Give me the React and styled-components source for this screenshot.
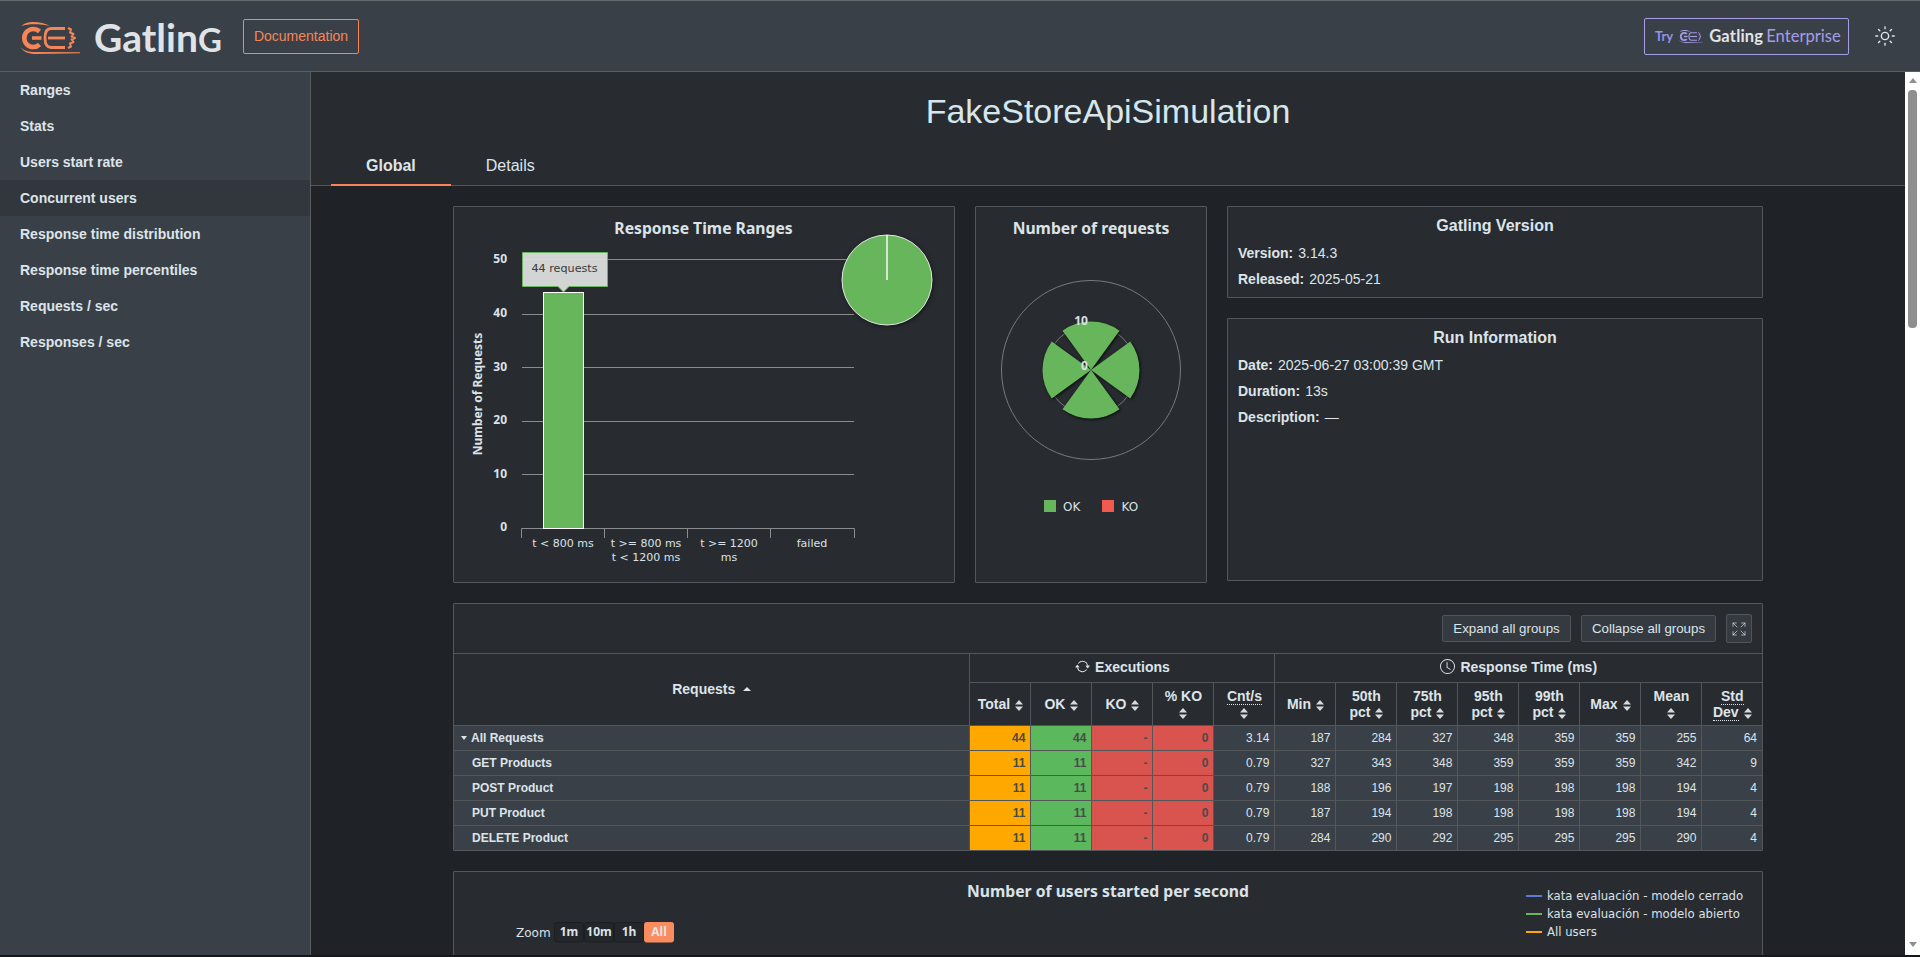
import React from "react";
import styled, { createGlobalStyle } from "styled-components";
import { Sun, Expand } from "lucide-react";
import { BsArrowRepeat, BsClock } from "react-icons/bs";

const ORANGE = "#f78557";
const TEXT = "#dde4ea";
const LINE = "#54575a";
const SLATE = "#3a4047";
const PANEL = "#282c30";
const GREEN = "#68b65c";

const Global = createGlobalStyle`
  html, body { margin: 0; padding: 0; height: 100%; overflow: hidden; background: #15171a; }
  * { box-sizing: border-box; }
  body { font-family: "Liberation Sans", Arial, sans-serif; color: ${TEXT}; }
`;

const Page = styled.div`
  height: 955px;
  display: flex;
  flex-direction: column;
`;

const Header = styled.header`
  height: 72px;
  flex: none;
  display: flex;
  align-items: center;
  background: ${SLATE};
  border-bottom: 1px solid #5b5e61;
  box-shadow: inset 0 2px 0 -1px #686b6e;
  padding: 1px 24px 0 20px;
`;

const Brand = styled.div`
  display: flex;
  align-items: center;
  gap: 14px;
  width: 223px;
  padding-top: 3px;
`;

const Wordmark = styled.span`
  font-family: Lato, sans-serif;
  font-weight: 700;
  font-size: 39px;
  line-height: 40px;
  letter-spacing: 0;
  color: #dfe3e8;
`;

const WordmarkG = styled.span`
  font-size: 33px;
`;

const DocLink = styled.a`
  height: 35px;
  width: 116px;
  display: flex;
  align-items: center;
  justify-content: center;
  border: 1px solid ${ORANGE};
  border-radius: 2px;
  color: ${ORANGE};
  font-size: 14px;
`;

const HeaderRight = styled.div`
  margin-left: auto;
  display: flex;
  align-items: center;
  gap: 25px;
`;

const EnterpriseLink = styled.a`
  height: 37px;
  width: 205px;
  display: flex;
  align-items: center;
  padding-left: 10px;
  border: 1px solid #a79ce6;
  border-radius: 2px;
  font-family: Lato, sans-serif;
`;

const Try = styled.span`
  font-size: 13px;
  font-weight: 700;
  margin-right: 6px;
  color: #8f94e6;
`;

const EntGatling = styled.span`
  font-size: 16.5px;
  font-weight: 700;
  letter-spacing: 0.2px;
  color: #e3e5e8;
  margin: 0 3px 0 6px;
`;

const EntWord = styled.span`
  font-size: 16.6px;
  color: #a79ce6;
`;

const Body = styled.div`
  flex: 1;
  min-height: 0;
  display: flex;
`;

const Sidebar = styled.nav`
  width: 311px;
  flex: none;
  background: ${SLATE};
  border-right: 1px solid #5b5e61;
`;

const NavItem = styled.div`
  height: 36px;
  padding-left: 20px;
  display: flex;
  align-items: center;
  font-size: 14px;
  font-weight: 700;
  background: ${(p) => (p.$active ? "#32363d" : "transparent")};
`;

const Main = styled.main`
  flex: 1;
  min-width: 0;
  background: #1f2327;
  overflow: hidden;
`;

const HeadBand = styled.div`
  height: 114px;
  background: ${PANEL};
  border-bottom: 1px solid ${LINE};
  display: flex;
  flex-direction: column;
`;

const Title = styled.h1`
  margin: 0;
  flex: 1;
  padding-top: 19px;
  text-align: center;
  font-size: 34px;
  line-height: 40px;
  font-weight: 400;
  color: #d5e6ec;
`;

const Tabs = styled.div`
  display: flex;
  padding-left: 20px;
  margin-bottom: -1px;
`;

const Tab = styled.div`
  height: 38px;
  padding: 0 35px;
  display: flex;
  align-items: center;
  font-size: 16px;
  font-weight: ${(p) => (p.$active ? 700 : 400)};
  border-bottom: 2px solid ${(p) => (p.$active ? ORANGE : "transparent")};
`;

const Content = styled.div`
  width: 1310px;
  margin: 0 auto;
  padding-top: 20px;
  display: flex;
  flex-direction: column;
  gap: 20px;
`;

const TopGrid = styled.div`
  display: grid;
  grid-template-columns: 502px 232px 1fr;
  gap: 20px;
  height: 377px;
`;

const Panel = styled.section`
  background: ${PANEL};
  border: 1px solid ${LINE};
  border-radius: 1px;
  min-width: 0;
`;

const InfoColumn = styled.div`
  display: flex;
  flex-direction: column;
  gap: 20px;
`;

const InfoPanel = styled(Panel)`
  height: ${(p) => p.$h}px;
  padding: 8px 10px;
`;

const InfoTitle = styled.h2`
  margin: 0 0 3px;
  text-align: center;
  font-size: 16px;
  line-height: 22px;
  font-weight: 700;
`;

const InfoRow = styled.div`
  height: 26px;
  display: flex;
  align-items: center;
  gap: 5px;
  font-size: 14px;
`;

const InfoLabel = styled.b`
  font-weight: 700;
`;

const ChartSvg = styled.svg`
  display: block;
`;

const ChartTitle = styled.text`
  font-family: "Noto Sans", sans-serif;
  font-size: 15.7px;
  font-weight: 700;
  fill: #dbe2e8;
  text-anchor: middle;
`;

const AxisValue = styled.text`
  font-family: "Noto Sans", sans-serif;
  font-size: 12px;
  font-weight: 700;
  fill: #dbe2e8;
  text-anchor: ${(p) => p.$anchor || "end"};
`;

const Small = styled.text`
  font-family: "DejaVu Sans", sans-serif;
  font-size: ${(p) => p.$size || 11}px;
  fill: ${(p) => p.$fill || "#dbe2e8"};
  text-anchor: ${(p) => p.$anchor || "middle"};
`;

const TablePanel = styled(Panel)`
  height: 248px;
`;

const Toolbar = styled.div`
  height: 50px;
  display: flex;
  justify-content: flex-end;
  align-items: center;
  gap: 10px;
  padding-right: 10px;
  border-bottom: 1px solid ${LINE};
`;

const ToolButton = styled.button`
  height: ${(p) => (p.$icon ? 29 : 27)}px;
  width: ${(p) => p.$w}px;
  padding: 0;
  display: flex;
  align-items: center;
  justify-content: center;
  background: #343a40;
  border: 1px solid #50555a;
  border-radius: 2px;
  color: ${TEXT};
  font-family: "Liberation Sans", sans-serif;
  font-size: 13.3px;
`;

const Table = styled.table`
  width: 100%;
  table-layout: fixed;
  border-collapse: collapse;
  font-size: 12px;
`;

const Th = styled.th`
  height: ${(p) => p.$h || 43}px;
  padding: 0 1px;
  border: 1px solid ${LINE};
  border-top: 0;
  font-size: 14px;
  line-height: 16px;
  font-weight: 700;
  text-align: center;
  &:first-child { border-left: 0; }
  &:last-child { border-right: 0; }
`;

const GroupLabel = styled.span`
  display: inline-flex;
  align-items: center;
  gap: 5px;
`;

const Abbr = styled.span`
  border-bottom: 1px dotted ${TEXT};
`;

const Td = styled.td`
  height: 25px;
  padding: 0 5px;
  border: 1px solid ${LINE};
  text-align: right;
  background: ${(p) => p.$bg || SLATE};
  color: ${(p) => (p.$bg ? "#4a4a4a" : TEXT)};
  font-weight: ${(p) => (p.$bg ? 700 : 400)};
  &:last-child { border-right: 0; }
`;

const NameCell = styled.td`
  height: 25px;
  padding: 0 0 0 ${(p) => (p.$root ? 7 : 18)}px;
  border: 1px solid ${LINE};
  border-left: 0;
  background: ${SLATE};
  font-weight: 700;
`;

const Caret = styled.span`
  display: inline-block;
  width: 0;
  height: 0;
  margin: 0 4px 1px 0;
  vertical-align: middle;
  border-left: 3px solid transparent;
  border-right: 3px solid transparent;
  border-top: 4px solid ${TEXT};
`;

const SortWrap = styled.svg`
  display: inline-block;
  vertical-align: -2px;
  margin-left: ${(p) => (p.$block ? 0 : 5)}px;
`;

const Sort = ({ block }) => (
  <SortWrap $block={block} width="8" height="11" viewBox="0 0 8 11">
    <path d="M4 0 8 4.5H0Z M4 11 8 6.5H0Z" fill="#d6dbe0" />
  </SortWrap>
);

const SortedUp = styled.span`
  display: inline-block;
  width: 0;
  height: 0;
  margin: 0 0 4px 8px;
  vertical-align: middle;
  border-left: 4px solid transparent;
  border-right: 4px solid transparent;
  border-bottom: 4px solid ${TEXT};
`;

const BottomPanel = styled(Panel)`
  height: 120px;
`;

const Scrollbar = styled.div`
  width: 15px;
  flex: none;
  background: #fff;
  display: flex;
  flex-direction: column;
  align-items: center;
  padding: 6px 0 8px;
`;

const ArrowUp = styled.div`
  width: 0;
  height: 0;
  border-left: 4.5px solid transparent;
  border-right: 4.5px solid transparent;
  border-bottom: 5px solid #8f8f8f;
`;

const ArrowDown = styled.div`
  width: 0;
  height: 0;
  margin-top: auto;
  border-left: 4.5px solid transparent;
  border-right: 4.5px solid transparent;
  border-top: 5px solid #8f8f8f;
`;

const Thumb = styled.div`
  width: 9px;
  height: 238px;
  margin-top: 7px;
  background: #8f8f8f;
  border-radius: 4px;
`;

const ZoomLabel = styled(AxisValue)`
  fill: ${(p) => (p.$active ? "#e8e3e0" : "#dbe2e8")};
`;

const ZoomButton = ({ x, label, active }) => (
  <g>
    <rect x={x + 0.5} y="922.5" width="29" height="19.5" rx="2" fill={active ? "#fb8c5f" : "#23272a"} stroke={active ? "#fb8c5f" : "#1c1f22"} />
    <ZoomLabel x={x + 15} y="936" $anchor="middle" $active={active}>{label}</ZoomLabel>
  </g>
);

const GatlingMark = ({ color, width, height }) => (
  <svg width={width} height={height} viewBox="0 0 60 32" fill="none">
    <path d="M1.5 4C6-1 20-1.5 30 4 20 1.5 8 1.5 1.5 4Z" fill={color} />
    <path d="M0.5 25C5 30 11 30 18 30L60 30.2V31.2L16 32C8 32 3 29.5 0.5 25Z" fill={color} />
    <path d="M19.5 9.5A9 9 0 1 0 19.5 22.5" stroke={color} strokeWidth="4.6" />
    <path d="M12 16H21.5" stroke={color} strokeWidth="3.6" />
    <path d="M45 6.5H31C27 6.5 25 10 25 16S27 25.5 31 25.5H45" stroke={color} strokeWidth="2.8" />
    <path d="M28 16H45" stroke={color} strokeWidth="2.8" />
    <path d="M48 6l3 1.5-1 3 3.5 1.5-2 2.5 3.5 1.5-3.5 1.5 2 2.5-3.5 1.5 1 3-3 1.5" stroke={color} strokeWidth="2" strokeLinejoin="round" />
  </svg>
);

const polar = (cx, cy, r, deg) => {
  const a = ((deg - 90) * Math.PI) / 180;
  return [cx + r * Math.cos(a), cy + r * Math.sin(a)];
};

const sector = (cx, cy, r, mid, half) => {
  const [x1, y1] = polar(cx, cy, r, mid - half);
  const [x2, y2] = polar(cx, cy, r, mid + half);
  return `M${cx} ${cy}L${x1} ${y1}A${r} ${r} 0 0 1 ${x2} ${y2}Z`;
};

const PieDisc = styled.circle`
  filter: drop-shadow(1px 1px 2px rgba(0, 0, 0, 0.5));
`;

const SectorGroup = styled.g`
  filter: drop-shadow(1px 1px 1.5px rgba(0, 0, 0, 0.8));
`;

const RangesChart = () => (
  <ChartSvg width="500" height="375" viewBox="454 207 500 375">
    <ChartTitle x="703.5" y="234">Response Time Ranges</ChartTitle>
    {[259.5, 314.5, 367.5, 421.5, 474.5].map((y) => (
      <line key={y} x1="522" x2="854" y1={y} y2={y} stroke="#8a8d8f" />
    ))}
    {[["50", 263], ["40", 317], ["30", 371], ["20", 424], ["10", 478], ["0", 531]].map(([t, y]) => (
      <AxisValue key={t} x="507" y={y}>{t}</AxisValue>
    ))}
    <AxisValue x="0" y="0" $anchor="middle" transform="translate(482 394) rotate(-90)">Number of Requests</AxisValue>
    <path d="M521.5 538V528.5H854.5V538M604.5 528.5V538M687.5 528.5V538M770.5 528.5V538" stroke="#8a8d8f" fill="none" />
    <rect x="543.5" y="292.5" width="40" height="236" fill={GREEN} stroke="#fff" />
    <Small x="563" y="547">{"t < 800 ms"}</Small>
    <Small x="646" y="547">{"t >= 800 ms"}</Small>
    <Small x="646" y="561">{"t < 1200 ms"}</Small>
    <Small x="729" y="547">{"t >= 1200"}</Small>
    <Small x="729" y="561">ms</Small>
    <Small x="812" y="547">failed</Small>
    <path d="M522.5 252.5H607.5V286.5H569L563.5 292 558 286.5H522.5Z" fill="#dcdddd" fillOpacity="0.95" stroke={GREEN} />
    <Small x="564.5" y="272" $fill="#3a3a3a" $size={11.2}>44 requests</Small>
    <PieDisc cx="887" cy="280" r="45" fill={GREEN} stroke="#e8e8e8" />
    <line x1="887" x2="887" y1="235" y2="280" stroke="#fff" strokeWidth="1.4" />
  </ChartSvg>
);

const RequestsChart = () => (
  <ChartSvg width="230" height="375" viewBox="976 207 230 375">
    <ChartTitle x="1091" y="234">Number of requests</ChartTitle>
    <circle cx="1091" cy="370" r="89.5" fill="none" stroke="#77797b" />
    <circle cx="1091" cy="370" r="45" fill="none" stroke="#77797b" />
    <SectorGroup>
      {[0, 90, 180, 270].map((m) => (
        <path key={m} d={sector(1091, 370, 48.5, m, 36)} fill={GREEN} />
      ))}
    </SectorGroup>
    <AxisValue x="1081" y="325" $anchor="middle">10</AxisValue>
    <AxisValue x="1084.5" y="369.5" $anchor="middle">0</AxisValue>
    <rect x="1044" y="500" width="12" height="12" fill={GREEN} />
    <Small x="1063" y="510.5" $anchor="start" $size={12}>OK</Small>
    <rect x="1102" y="500" width="12" height="12" fill="#f15b4f" />
    <Small x="1121.5" y="510.5" $anchor="start" $size={12}>KO</Small>
  </ChartSvg>
);

const UsersChart = () => (
  <ChartSvg width="1308" height="118" viewBox="454 872 1308 118">
    <ChartTitle x="1108" y="896.5">Number of users started per second</ChartTitle>
    <Small x="516" y="937" $anchor="start" $size={12}>Zoom</Small>
    <ZoomButton x={554} label="1m" />
    <ZoomButton x={584} label="10m" />
    <ZoomButton x={614} label="1h" />
    <ZoomButton x={644} label="All" active />
    {[["#5e78d9", "kata evaluación - modelo cerrado", 896], [GREEN, "kata evaluación - modelo abierto", 914], ["#ffa900", "All users", 932]].map(([c, t, y]) => (
      <g key={t}>
        <line x1="1526" x2="1542" y1={y} y2={y} stroke={c} strokeWidth="2" />
        <Small x="1547" y={y + 4} $anchor="start" $size={11.7}>{t}</Small>
      </g>
    ))}
  </ChartSvg>
);

const NAV = ["Ranges", "Stats", "Users start rate", "Concurrent users", "Response time distribution", "Response time percentiles", "Requests / sec", "Responses / sec"];

const ROWS = [
  ["All Requests", "44", "44", "3.14", "187", "284", "327", "348", "359", "359", "255", "64"],
  ["GET Products", "11", "11", "0.79", "327", "343", "348", "359", "359", "359", "342", "9"],
  ["POST Product", "11", "11", "0.79", "188", "196", "197", "198", "198", "198", "194", "4"],
  ["PUT Product", "11", "11", "0.79", "187", "194", "198", "198", "198", "198", "194", "4"],
  ["DELETE Product", "11", "11", "0.79", "284", "290", "292", "295", "295", "295", "290", "4"],
];

export default function App() {
  return (
    <Page>
      <Global />
      <Header>
        <Brand>
          <GatlingMark color={ORANGE} width={60} height={32} />
          <Wordmark>Gatlin<WordmarkG>G</WordmarkG></Wordmark>
        </Brand>
        <DocLink>Documentation</DocLink>
        <HeaderRight>
          <EnterpriseLink>
            <Try>Try</Try>
            <GatlingMark color="#a79ce6" width={24} height={13} />
            <EntGatling>Gatling</EntGatling>
            <EntWord>Enterprise</EntWord>
          </EnterpriseLink>
          <Sun size={22} strokeWidth={1.5} color="#e4e6e8" />
        </HeaderRight>
      </Header>
      <Body>
        <Sidebar>
          {NAV.map((n) => (
            <NavItem key={n} $active={n === "Concurrent users"}>{n}</NavItem>
          ))}
        </Sidebar>
        <Main>
          <HeadBand>
            <Title>FakeStoreApiSimulation</Title>
            <Tabs>
              <Tab $active>Global</Tab>
              <Tab>Details</Tab>
            </Tabs>
          </HeadBand>
          <Content>
            <TopGrid>
              <Panel><RangesChart /></Panel>
              <Panel><RequestsChart /></Panel>
              <InfoColumn>
                <InfoPanel $h={92}>
                  <InfoTitle>Gatling Version</InfoTitle>
                  <InfoRow><InfoLabel>Version:</InfoLabel>3.14.3</InfoRow>
                  <InfoRow><InfoLabel>Released:</InfoLabel>2025-05-21</InfoRow>
                </InfoPanel>
                <InfoPanel $h={263}>
                  <InfoTitle>Run Information</InfoTitle>
                  <InfoRow><InfoLabel>Date:</InfoLabel>2025-06-27 03:00:39 GMT</InfoRow>
                  <InfoRow><InfoLabel>Duration:</InfoLabel>13s</InfoRow>
                  <InfoRow><InfoLabel>Description:</InfoLabel>—</InfoRow>
                </InfoPanel>
              </InfoColumn>
            </TopGrid>
            <TablePanel>
              <Toolbar>
                <ToolButton $w={129}>Expand all groups</ToolButton>
                <ToolButton $w={135}>Collapse all groups</ToolButton>
                <ToolButton $w={26} $icon><Expand size={16} strokeWidth={1} /></ToolButton>
              </Toolbar>
              <Table>
                <colgroup>
                  <col />
                  {Array.from({ length: 13 }, (_, i) => <col key={i} width={i === 12 ? "60" : "61"} />)}
                </colgroup>
                <thead>
                  <tr>
                    <Th rowSpan={2}>Requests<SortedUp /></Th>
                    <Th colSpan={5} $h={28}><GroupLabel><BsArrowRepeat size={15} />Executions</GroupLabel></Th>
                    <Th colSpan={8} $h={28}><GroupLabel><BsClock size={15} />Response Time (ms)</GroupLabel></Th>
                  </tr>
                  <tr>
                    <Th>Total<Sort /></Th>
                    <Th>OK<Sort /></Th>
                    <Th>KO<Sort /></Th>
                    <Th>% KO<br /><Sort block /></Th>
                    <Th><Abbr>Cnt/s</Abbr><br /><Sort block /></Th>
                    <Th>Min<Sort /></Th>
                    <Th>50th<br />pct<Sort /></Th>
                    <Th>75th<br />pct<Sort /></Th>
                    <Th>95th<br />pct<Sort /></Th>
                    <Th>99th<br />pct<Sort /></Th>
                    <Th>Max<Sort /></Th>
                    <Th>Mean<br /><Sort block /></Th>
                    <Th><Abbr>Std</Abbr><br /><Abbr>Dev</Abbr><Sort /></Th>
                  </tr>
                </thead>
                <tbody>
                  {ROWS.map(([name, total, ok, cnt, ...rest], i) => (
                    <tr key={name}>
                      <NameCell $root={i === 0}>{i === 0 && <Caret />}{name}</NameCell>
                      <Td $bg="#ffa900">{total}</Td>
                      <Td $bg="#5cb85c">{ok}</Td>
                      <Td $bg="#d9534f">-</Td>
                      <Td $bg="#d9534f">0</Td>
                      <Td>{cnt}</Td>
                      {rest.map((v, j) => <Td key={j}>{v}</Td>)}
                    </tr>
                  ))}
                </tbody>
              </Table>
            </TablePanel>
            <BottomPanel><UsersChart /></BottomPanel>
          </Content>
        </Main>
        <Scrollbar>
          <ArrowUp />
          <Thumb />
          <ArrowDown />
        </Scrollbar>
      </Body>
    </Page>
  );
}
